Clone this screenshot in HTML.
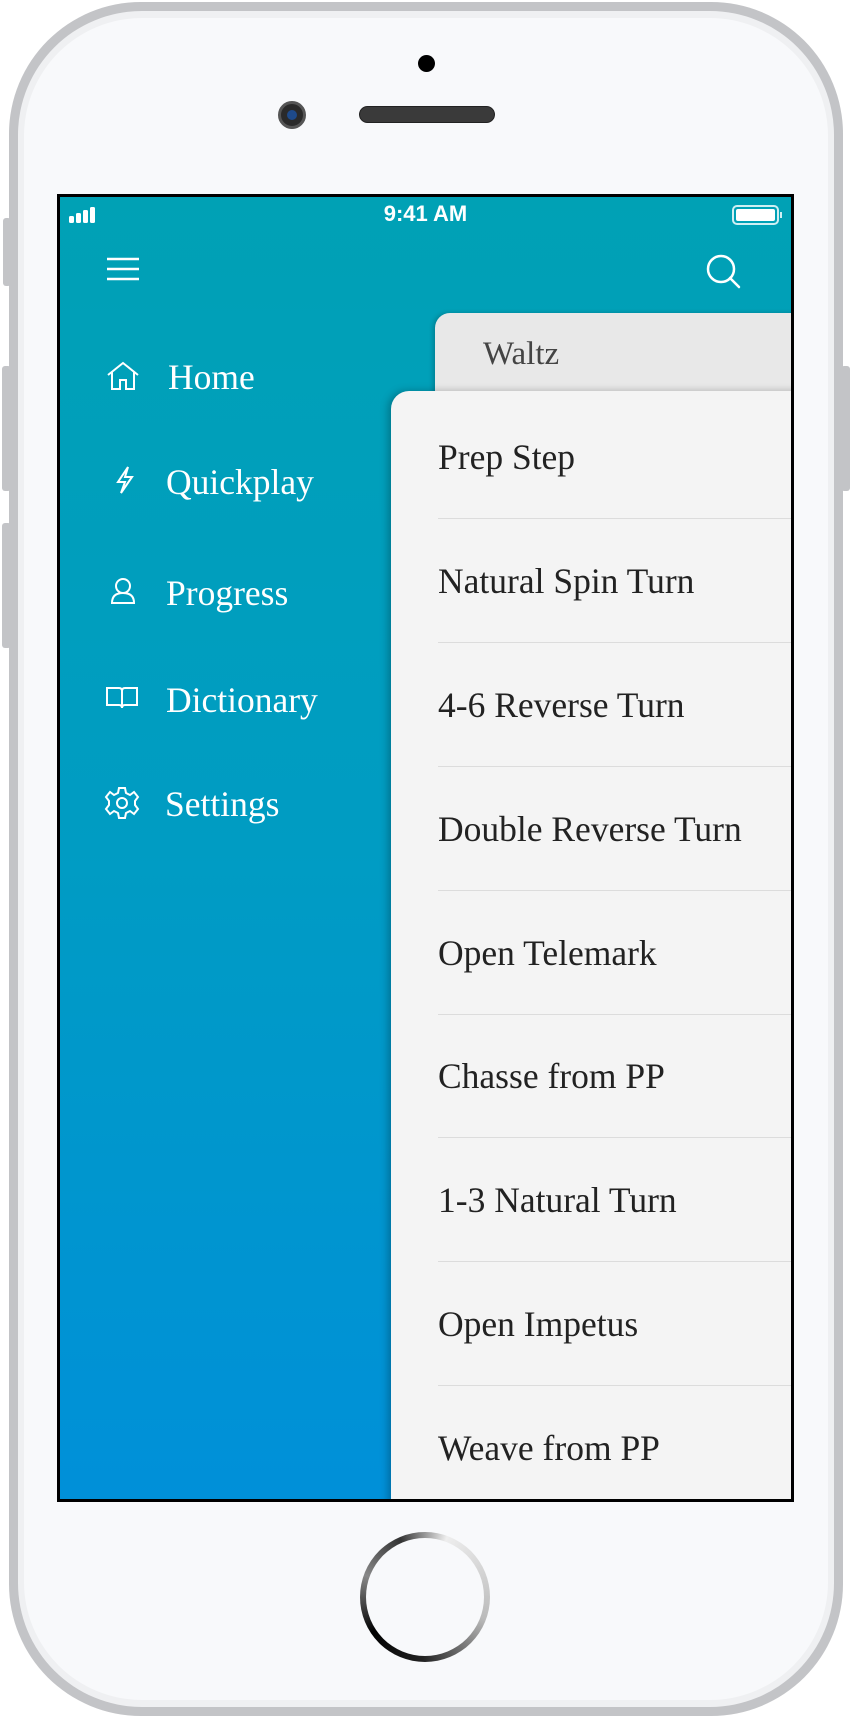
<!DOCTYPE html>
<html><head><meta charset="utf-8"><style>
*{margin:0;padding:0;box-sizing:border-box}
body{width:852px;height:1719px;background:#fff;position:relative;overflow:hidden;font-family:"Liberation Serif",serif}
.abs{position:absolute}
.phone{left:9px;top:2px;width:834px;height:1714px;border-radius:132px;background:#c3c4c7}
.face{left:18px;top:11px;width:816px;height:1696px;border-radius:124px;background:#eff0f2}
.face2{left:24px;top:18px;width:804px;height:1682px;border-radius:118px;background:#f8f9fb}
.btn{background:#c3c4c7;border-radius:3px}
.screen{left:57px;top:194px;width:737px;height:1308px;background:#000}
.content{left:60px;top:197px;width:731px;height:1302px;overflow:hidden;background:linear-gradient(#00a1b5,#009cc3 50%,#0090d9)}
.menu{color:#fff;font-size:35.5px}
.list{left:331px;top:194px;width:420px;height:1120px;background:#f4f4f4;border-top-left-radius:18px;box-shadow:-3px 0 8px rgba(0,0,0,.25)}
.item{position:absolute;left:47px;font-size:35.5px;color:#222;white-space:nowrap}
.sep{position:absolute;left:47px;right:0;height:1px;background:#dcdcdc}
</style></head><body>
<div class="abs btn" style="left:3px;top:218px;width:8px;height:68px"></div>
<div class="abs btn" style="left:2px;top:366px;width:9px;height:125px"></div>
<div class="abs btn" style="left:2px;top:523px;width:9px;height:125px"></div>
<div class="abs btn" style="left:841px;top:366px;width:9px;height:125px"></div>
<div class="abs phone"></div>
<div class="abs face"></div>
<div class="abs face2"></div>
<div class="abs" style="left:418px;top:55px;width:17px;height:17px;border-radius:50%;background:#000"></div>
<div class="abs" style="left:278px;top:101px;width:28px;height:28px;border-radius:50%;background:#2a2a2a;border:3px solid #555"><div class="abs" style="left:6px;top:6px;width:10px;height:10px;border-radius:50%;background:#1e4a8a"></div></div>
<div class="abs" style="left:359px;top:106px;width:136px;height:17px;border-radius:9px;background:#3a3a3a;border:1px solid #222"></div>
<div class="abs" style="left:360px;top:1532px;width:130px;height:130px;border-radius:50%;background:conic-gradient(from 20deg,#eee,#bbb 25%,#222 45%,#000 60%,#888 75%,#333 88%,#eee)"></div>
<div class="abs" style="left:366px;top:1538px;width:118px;height:118px;border-radius:50%;background:#f8f9fb"></div>
<div class="abs screen"></div>
<div class="abs content">
  <svg class="abs" style="left:9px;top:9px" width="34" height="18"><rect x="0" y="10" width="5" height="7" rx="1.5" fill="#fff"/><rect x="7" y="7" width="5" height="10" rx="1.5" fill="#fff"/><rect x="14" y="4" width="5" height="13" rx="1.5" fill="#fff"/><rect x="21" y="1" width="5" height="16" rx="1.5" fill="#fff"/></svg>
  <div class="abs" style="left:0;width:731px;top:4px;text-align:center;color:#fff;font:bold 22px 'Liberation Sans',sans-serif">9:41 AM</div>
  <svg class="abs" style="left:672px;top:8px" width="52" height="20"><rect x="1" y="1" width="45" height="18" rx="4" fill="none" stroke="#cfeff3" stroke-width="2"/><rect x="4" y="4" width="39" height="12" rx="2" fill="#fff"/><rect x="48" y="7" width="2" height="6" fill="#cfeff3"/></svg>
  <svg class="abs" style="left:46px;top:60px" width="34" height="24"><path d="M1 2H33M1 12H33M1 22H33" stroke="#fff" stroke-width="2.5"/></svg>
  <svg class="abs" style="left:645px;top:56px" width="38" height="38"><circle cx="16" cy="16" r="13" fill="none" stroke="#fff" stroke-width="2.5"/><path d="M25 25L34 34" stroke="#fff" stroke-width="2.5" stroke-linecap="round"/></svg>
  <svg class="abs" style="left:46px;top:164px" width="34" height="30" fill="none" stroke="#fff" stroke-width="2"><path d="M2 14L17 2 32 14M6 11V28H14V19H20V28H28V11"/></svg>
  <div class="abs menu" style="left:108px;top:159px">Home</div>
  <svg class="abs" style="left:54px;top:268px" width="22" height="30" fill="none" stroke="#fff" stroke-width="2"><path d="M14 2L4 17H11L7 28 18 12H11Z"/></svg>
  <div class="abs menu" style="left:106px;top:264px">Quickplay</div>
  <svg class="abs" style="left:50px;top:380px" width="26" height="28" fill="none" stroke="#fff" stroke-width="2"><circle cx="13" cy="9" r="7"/><path d="M2 26C2 19 6 16 13 16S24 19 24 26Z"/></svg>
  <div class="abs menu" style="left:106px;top:375px">Progress</div>
  <svg class="abs" style="left:45px;top:487px" width="34" height="26" fill="none" stroke="#fff" stroke-width="2"><path d="M2 4H14Q17 4 17 7V24Q17 21 14 21H2ZM32 4H20Q17 4 17 7V24Q17 21 20 21H32Z"/></svg>
  <div class="abs menu" style="left:106px;top:482px">Dictionary</div>
  <svg class="abs" style="left:44px;top:588px" width="36" height="36" fill="none" stroke="#fff" stroke-width="2"><circle cx="18" cy="18" r="5"/><path d="M15 3H21L22 8 26 10 30 7 34 12 31 16V20L34 24 30 29 26 26 22 28 21 33H15L14 28 10 26 6 29 2 24 5 20V16L2 12 6 7 10 10 14 8Z"/></svg>
  <div class="abs menu" style="left:105px;top:586px">Settings</div>
  <div class="abs" style="left:375px;top:116px;width:370px;height:90px;background:#e8e8e8;border-top-left-radius:15px;box-shadow:-2px 0 5px rgba(0,0,0,.2)"></div>
  <div class="abs" style="left:423px;top:139px;font-size:33px;color:#444">Waltz</div>
  <div class="list abs">
    <div class="item" style="top:45px">Prep Step</div>
    <div class="sep" style="top:127px"></div>
    <div class="item" style="top:169px">Natural Spin Turn</div>
    <div class="sep" style="top:251px"></div>
    <div class="item" style="top:293px">4-6 Reverse Turn</div>
    <div class="sep" style="top:375px"></div>
    <div class="item" style="top:417px">Double Reverse Turn</div>
    <div class="sep" style="top:499px"></div>
    <div class="item" style="top:541px">Open Telemark</div>
    <div class="sep" style="top:623px"></div>
    <div class="item" style="top:664px">Chasse from PP</div>
    <div class="sep" style="top:746px"></div>
    <div class="item" style="top:788px">1-3 Natural Turn</div>
    <div class="sep" style="top:870px"></div>
    <div class="item" style="top:912px">Open Impetus</div>
    <div class="sep" style="top:994px"></div>
    <div class="item" style="top:1036px">Weave from PP</div>
  </div>
</div>
</body></html>
